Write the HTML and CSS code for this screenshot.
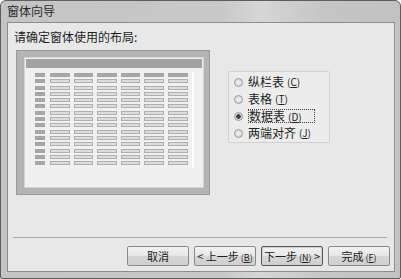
FILE: index.html
```html
<!DOCTYPE html>
<html lang="zh-CN">
<head>
    <meta charset="UTF-8">
    <title>窗体向导</title>
    <link rel="stylesheet" href="styles.css">
</head>
<body>
    <div class="window">
        <div class="titlebar">窗体向导</div>

        <div class="client">
            <div class="prompt">请确定窗体使用的布局:</div>

            <div class="main">
                <!-- 预览图 -->
                <div class="preview">
                    <div class="preview-inner">
                        <div class="preview-head"></div>
                        <div class="sheet">
                            <div class="grid" id="grid"></div>
                            <div class="scroll"></div>
                        </div>
                    </div>
                </div>

                <!-- 布局选项 -->
                <div class="options">
                    <label class="option"><span class="radio"></span>纵栏表<span class="key">(<u>C</u>)</span></label>
                    <label class="option"><span class="radio"></span>表格<span class="key">(<u>T</u>)</span></label>
                    <label class="option checked"><span class="radio"></span><span class="focus">数据表<span class="key">(<u>D</u>)</span></span></label>
                    <label class="option"><span class="radio"></span>两端对齐<span class="key">(<u>J</u>)</span></label>
                </div>
            </div>

            <div class="separator"></div>

            <div class="buttons">
                <button class="btn">取消</button>
                <button class="btn">&lt; 上一步<span class="key">(<u>B</u>)</span></button>
                <button class="btn default">下一步<span class="key">(<u>N</u>)</span> &gt;</button>
                <button class="btn">完成<span class="key">(<u>F</u>)</span></button>
            </div>
        </div>
    </div>

    <script>
        // 生成数据表预览的单元格
        const grid = document.getElementById('grid');
        for (let r = 0; r < 15; r++) {
            for (let c = 0; c < 7; c++) {
                const cell = document.createElement('div');
                cell.className = 'cell';
                if (c === 0) cell.className += ' row-head';
                else if (r === 0) cell.className += ' col-head';
                grid.appendChild(cell);
            }
        }
    </script>
</body>
</html>
```

FILE: styles.css
```css
* {
    margin: 0;
    padding: 0;
    box-sizing: border-box;
}

body {
    width: 401px;
    height: 279px;
    overflow: hidden;
    background-color: #ffffff;
    font-family: "Noto Sans CJK SC", "DejaVu Sans", sans-serif;
    font-size: 12px;
    color: #1e1e1e;
}

.window {
    width: 401px;
    height: 279px;
    border: 1px solid #5e5e5e;
    border-radius: 6px 6px 2px 2px;
    background: linear-gradient(90deg, #c4c4c4 0%, #c8c8c8 55%, #d6d6d6 65%, #c6c6c6 80%, #c2c2c2 100%);
    padding: 0 5px 6px 6px;
    display: flex;
    flex-direction: column;
}

.titlebar {
    height: 21px;
    line-height: 20px;
    font-size: 12px;
    color: #2a2a2a;
}

.client {
    flex: 1;
    background-color: #e8e8e8;
    border: 1px solid #8e8e8e;
    display: flex;
    flex-direction: column;
}

.prompt {
    padding: 7px 0 0 6px;
    line-height: 14px;
    height: 27px;
}

.main {
    display: flex;
    align-items: flex-start;
    padding-left: 8px;
}

/* 预览 */
.preview {
    width: 194px;
    height: 145px;
    background-color: #b4b4b4;
    border: 1px solid #9a9a9a;
    padding: 6px 5px 6px 7px;
}

.preview-inner {
    height: 100%;
    background-color: #f0f0f0;
    border: 1px solid #d4d4d4;
    padding: 1px 1px 0 1px;
}

.preview-head {
    height: 9px;
    background-color: #a2a2a2;
}

.sheet {
    display: flex;
    padding: 4px 0 0 9px;
    height: 101px;
    overflow: hidden;
}

.grid {
    display: grid;
    grid-template-columns: 11px repeat(6, 19.6px);
    grid-auto-rows: 4px;
    column-gap: 4px;
    row-gap: 2.3px;
    margin-top: 1px;
    height: 95px;
    overflow: hidden;
}

.cell {
    border: 1px solid #b0b0b0;
    background-color: #dcdcdc;
}

.row-head {
    width: 10px;
    border-color: #a4a4a4;
    background-color: #a8a8a8;
}

.col-head {
    border-color: #a4a4a4;
    background-color: #a8a8a8;
}

.scroll {
    width: 2px;
    height: 96px;
    margin-left: 4px;
    background-color: #ffffff;
}

/* 选项 */
.options {
    margin: 21px 0 0 18px;
    width: 102px;
    height: 72px;
    border: 1px solid #d2d2d2;
    border-radius: 2px;
    background-color: #ececec;
    padding: 3px 0 0 5px;
    display: flex;
    flex-direction: column;
    gap: 3px;
}

.option {
    display: flex;
    align-items: center;
    height: 14px;
    line-height: 14px;
    color: #222;
    white-space: nowrap;
}

.radio {
    width: 9px;
    height: 9px;
    border-radius: 50%;
    border: 1px solid #9c9c9c;
    background: radial-gradient(circle, #f4f4f4 0%, #cfcfcf 100%);
    margin-right: 5px;
    flex-shrink: 0;
}

.checked .radio {
    background: radial-gradient(circle, #3c3c3c 0 2px, #e0e0e0 2.5px, #cfcfcf 100%);
}

.focus {
    border: 1px dotted #444;
    padding: 0 12px 0 0;
    line-height: 11px;
}

.key {
    font-size: 10px;
    margin-left: 3px;
}

u {
    text-decoration: underline;
}

/* 底部 */
.separator {
    margin: 42px 7px 0 5px;
    border-top: 1px solid #a8a8a8;
}

.buttons {
    display: flex;
    justify-content: flex-end;
    gap: 5px;
    padding: 8px 4px 0 0;
}

.btn {
    width: 62px;
    height: 20px;
    padding: 0;
    white-space: nowrap;
    font-family: inherit;
    font-size: 11px;
    line-height: 18px;
    color: #222;
    border: 1px solid #8a8a8a;
    border-radius: 2px;
    background: linear-gradient(#f2f2f2 0%, #e6e6e6 50%, #d6d6d6 51%, #d0d0d0 100%);
}

.btn .key {
    font-size: 9px;
    margin-left: 2px;
}

.default {
    border-color: #5a5a5a;
    box-shadow: inset 0 0 0 1px #cfcfcf;
}
```
